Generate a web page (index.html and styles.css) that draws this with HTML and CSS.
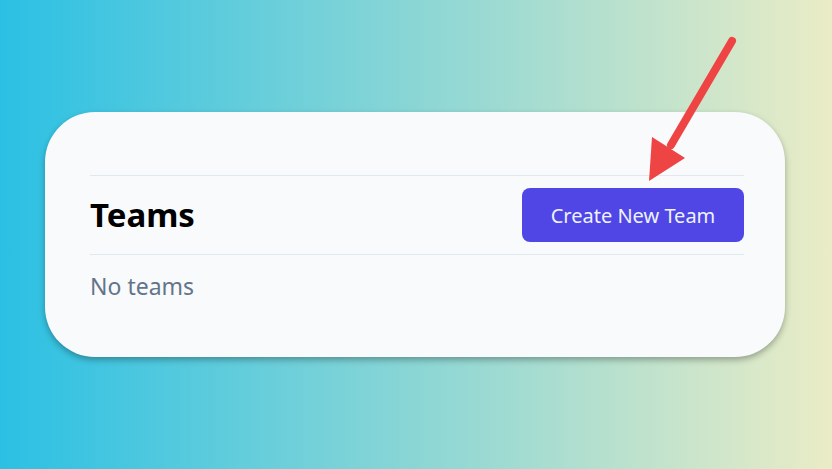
FILE: index.html
```html
<!DOCTYPE html>
<html lang="en">
<head>
  <meta charset="UTF-8" />
  <meta name="viewport" content="width=device-width, initial-scale=1.0"/>
  <title>Teams</title>
  <link rel="stylesheet" href="styles.css">
</head>
<body>
  <div class="teams-card">
    <header class="teams-header">
      <h1>Teams</h1>
      <button type="button">Create New Team</button>
    </header>
    <p class="empty">No teams</p>
  </div>

  <!-- pointer arrow drawn over the page -->
  <svg class="pointer" width="832" height="469" viewBox="0 0 832 469">
    <line x1="732" y1="41" x2="671" y2="145" stroke="#ef4444" stroke-width="8" stroke-linecap="round" />
    <polygon points="649,181 652,137 685,158" fill="#ef4444" />
  </svg>
</body>
</html>
```

FILE: styles.css
```css
body {
  font-family: 'Noto Sans', 'Segoe UI', sans-serif;
  background: linear-gradient(to right, #2bc0e4, #eaecc6);
  display: flex;
  justify-content: center;
  align-items: center;
  min-height: 100vh;
  margin: 0;
  position: relative;
  overflow: hidden;
}

.teams-card {
  background: #f8fafc;
  border-radius: 50px;
  box-shadow: 0 3px 6px rgba(0, 0, 0, 0.3);
  width: 740px;
  box-sizing: border-box;
  margin-right: 2px;
  padding: 63px 41px 40px 45px;
}

.teams-header {
  display: flex;
  justify-content: space-between;
  align-items: center;
  padding: 12px 0;
  border-top: 1px solid #e2e8f0;
  border-bottom: 1px solid #e2e8f0;
}

.teams-header h1 {
  margin: 0;
  font-size: 33px;
  line-height: 40px;
  font-weight: 700;
  color: #000;
}

.teams-header button {
  width: 222px;
  height: 54px;
  background: #4f46e5;
  color: #eef2ff;
  border: none;
  border-radius: 8px;
  font-family: inherit;
  font-size: 20px;
  cursor: pointer;
}

.empty {
  margin: 16px 0;
  font-size: 23px;
  line-height: 30px;
  color: #64748b;
}

.pointer {
  position: absolute;
  top: 0;
  left: 0;
  pointer-events: none;
}
```
